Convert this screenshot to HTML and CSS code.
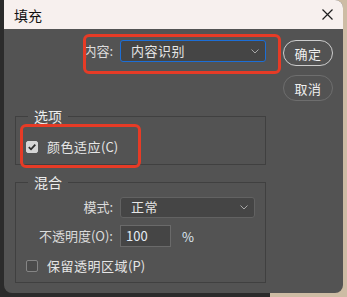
FILE: index.html
```html
<!DOCTYPE html>
<html lang="zh-CN">
<head>
    <meta charset="UTF-8">
    <meta name="viewport" content="width=device-width, initial-scale=1.0">
    <title>填充</title>
    <link rel="stylesheet" href="styles.css">
</head>
<body>
    <div class="dialog">
        <div class="titlebar">
            <span class="title">填充</span>
            <button type="button" class="close">
                <svg width="11" height="11" viewBox="0 0 11 11"><path d="M0.5 0.5 L10.5 10.5 M10.5 0.5 L0.5 10.5" stroke="#1e1e1e" stroke-width="1.2" fill="none"/></svg>
            </button>
        </div>
        <div class="content">
            <div class="main">
                <div class="row top-row">
                    <span class="field-label">内容:</span>
                    <div class="select select-content">
                        <span>内容识别</span>
                        <svg class="chevron" width="8" height="5" viewBox="0 0 8 5"><path d="M0.5 0.5 L4 4 L7.5 0.5" stroke="#a8a8a8" stroke-width="1" fill="none"/></svg>
                    </div>
                </div>

                <fieldset class="group options">
                    <legend>选项</legend>
                    <label class="check">
                        <span class="box checked">
                            <svg width="10" height="10" viewBox="0 0 10 10"><path d="M1.8 5.2 L4 7.3 L8.3 2.6" stroke="#2e2e2e" stroke-width="1.8" fill="none"/></svg>
                        </span>
                        <span class="check-text">颜色适应<span class="key">(C)</span></span>
                    </label>
                </fieldset>

                <fieldset class="group blend">
                    <legend>混合</legend>
                    <div class="row">
                        <span class="field-label inner">模式:</span>
                        <div class="select select-mode">
                            <span>正常</span>
                            <svg class="chevron" width="8" height="5" viewBox="0 0 8 5"><path d="M0.5 0.5 L4 4 L7.5 0.5" stroke="#a8a8a8" stroke-width="1" fill="none"/></svg>
                        </div>
                    </div>
                    <div class="row opacity-row">
                        <span class="field-label inner">不透明度(O):</span>
                        <div class="number-input">100</div>
                        <span class="unit">%</span>
                    </div>
                    <label class="check keep">
                        <span class="box"></span>
                        <span class="check-text">保留透明区域<span class="key">(P)</span></span>
                    </label>
                </fieldset>
            </div>

            <div class="buttons">
                <button type="button" class="btn primary">确定</button>
                <button type="button" class="btn">取消</button>
            </div>

            <!-- red annotation boxes -->
            <div class="mark mark-content"></div>
            <div class="mark mark-check"></div>
        </div>
    </div>
</body>
</html>
```

FILE: styles.css
```css
*{
    margin: 0;
    padding: 0;
    box-sizing: border-box;
}
body{
    width: 347px;
    height: 297px;
    overflow: hidden;
    background: linear-gradient(to right, #2b2b2b 270px, #cdbca4 270px);
    font-family: "Noto Sans CJK SC", "Noto Sans", sans-serif;
    font-size: 13px;
    color: #e6e6e6;
}
.dialog{
    width: 339px;
    height: 293px;
    margin-left: 4px;
    border-radius: 0 8px 8px 8px;
    overflow: hidden;
    background-color: #535353;
}
.titlebar{
    height: 29px;
    background-color: #f7f0ee;
    display: flex;
    align-items: center;
    justify-content: space-between;
    padding-left: 10px;
    padding-right: 8px;
}
.title{
    font-size: 14px;
    color: #111;
    line-height: 16px;
}
.close{
    width: 16px;
    height: 16px;
    border: none;
    background: transparent;
    display: flex;
    align-items: center;
    justify-content: center;
}
.content{
    position: relative;
    display: flex;
    gap: 17px;
    padding: 11px 10px 0 11px;
}
.main{
    width: 251px;
}
.row{
    display: flex;
    align-items: center;
    gap: 7px;
    height: 22px;
}
.field-label{
    width: 98px;
    text-align: right;
    line-height: 16px;
    color: #dcdcdc;
}
.field-label.inner{
    width: 87px;
}
.select{
    height: 22px;
    display: flex;
    align-items: center;
    justify-content: space-between;
    padding: 0 6px 0 10px;
    background-color: #454545;
    border: 1px solid #626262;
    border-radius: 3px;
    line-height: 16px;
    letter-spacing: 0.5px;
}
.select-content{
    width: 146px;
    border-color: #1c6ed6;
}
.select-mode{
    width: 135px;
    height: 21px;
}
.group{
    border: 1px solid #404040;
    padding: 0 10px;
}
.group legend{
    margin-left: 2px;
    padding: 0 6px;
    font-size: 14px;
    line-height: 16px;
    color: #ececec;
}
.options{
    margin-top: 46px;
    padding-top: 15px;
    padding-bottom: 9px;
}
.blend{
    margin-top: 9px;
    padding-top: 6px;
    padding-bottom: 8px;
}
.check{
    display: flex;
    align-items: center;
    gap: 9px;
    height: 16px;
    line-height: 16px;
}
.check-text{
    letter-spacing: 0.5px;
}
.box{
    width: 12px;
    height: 12px;
    border: 1px solid #858585;
    border-radius: 2px;
    background-color: #4b4b4b;
    display: flex;
    align-items: center;
    justify-content: center;
}
.box.checked{
    background-color: #d6d6d6;
    border-color: #d6d6d6;
}
.key{
    letter-spacing: 0;
}
.opacity-row{
    margin-top: 7px;
}
.number-input{
    width: 51px;
    height: 22px;
    padding-left: 5px;
    background-color: #454545;
    border: 1px solid #6a6a6a;
    line-height: 20px;
    color: #e4ecf4;
}
.unit{
    margin-left: 4px;
    color: #dde6f0;
}
.keep{
    margin-top: 11px;
}
.buttons{
    display: flex;
    flex-direction: column;
    gap: 9px;
}
.btn{
    width: 50px;
    height: 26px;
    border-radius: 13px;
    border: 1.5px solid #6e6e6e;
    background-color: transparent;
    color: #efefef;
    font-family: inherit;
    font-size: 13px;
    letter-spacing: 0.5px;
}
.btn.primary{
    border-color: #cdcdcd;
}
.mark{
    position: absolute;
    border: 3px solid #e63b26;
    border-radius: 6px;
}
.mark-content{
    left: 79px;
    top: 5px;
    width: 198px;
    height: 40px;
}
.mark-check{
    left: 16px;
    top: 95px;
    width: 121px;
    height: 44px;
}
```
